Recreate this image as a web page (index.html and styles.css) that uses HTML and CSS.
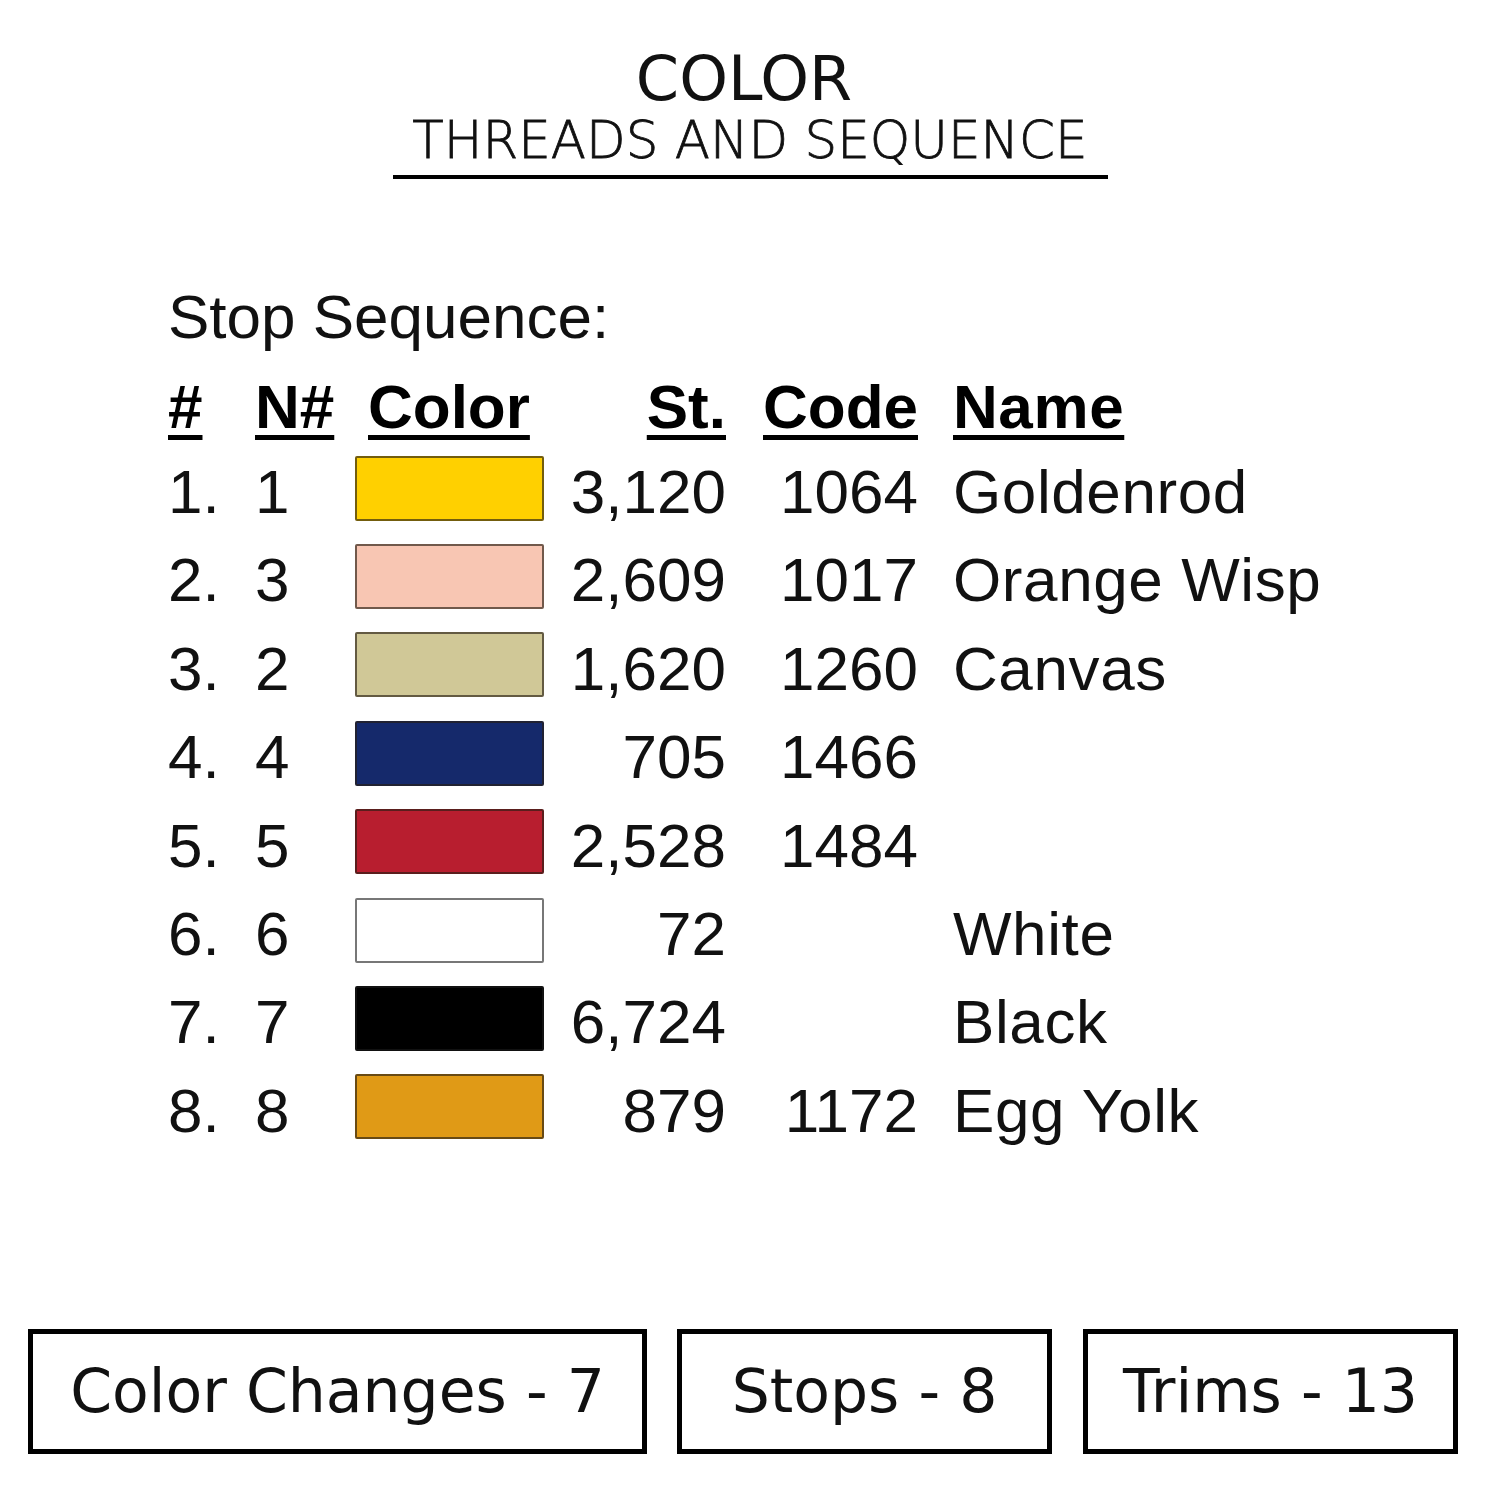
FILE: index.html
```html
<!DOCTYPE html>
<html>
<head>
<meta charset="utf-8">
<link rel="stylesheet" href="styles.css">
</head>
<body>
<div class="page">
  <header class="head">
    <div class="head-inner">
      <div class="title">COLOR</div>
      <div class="subtitle">THREADS AND SEQUENCE</div>
    </div>
  </header>

  <section class="seq">
    <div class="seq-title">Stop Sequence:</div>
    <div class="grid">
      <div class="h"><span class="u">#</span></div>
      <div class="h"><span class="u">N#</span></div>
      <div class="h h-color"><span class="u">Color</span></div>
      <div class="h r"><span class="u">St.</span></div>
      <div class="h r"><span class="u">Code</span></div>
      <div class="h name"><span class="u">Name</span></div>

      <div class="c">1.</div><div class="c">1</div><div class="sw"><span class="swatch gold"></span></div><div class="c r">3,120</div><div class="c r">1064</div><div class="c name">Goldenrod</div>
      <div class="c">2.</div><div class="c">3</div><div class="sw"><span class="swatch pink"></span></div><div class="c r">2,609</div><div class="c r">1017</div><div class="c name">Orange Wisp</div>
      <div class="c">3.</div><div class="c">2</div><div class="sw"><span class="swatch canvas"></span></div><div class="c r">1,620</div><div class="c r">1260</div><div class="c name">Canvas</div>
      <div class="c">4.</div><div class="c">4</div><div class="sw"><span class="swatch navy"></span></div><div class="c r">705</div><div class="c r">1466</div><div class="c name"></div>
      <div class="c">5.</div><div class="c">5</div><div class="sw"><span class="swatch red"></span></div><div class="c r">2,528</div><div class="c r">1484</div><div class="c name"></div>
      <div class="c">6.</div><div class="c">6</div><div class="sw"><span class="swatch white"></span></div><div class="c r">72</div><div class="c r"></div><div class="c name">White</div>
      <div class="c">7.</div><div class="c">7</div><div class="sw"><span class="swatch black"></span></div><div class="c r">6,724</div><div class="c r"></div><div class="c name">Black</div>
      <div class="c">8.</div><div class="c">8</div><div class="sw"><span class="swatch yolk"></span></div><div class="c r">879</div><div class="c r">1172</div><div class="c name">Egg Yolk</div>
    </div>
  </section>

  <footer class="stats">
    <div class="stat wide">Color Changes - 7</div>
    <div class="stat">Stops - 8</div>
    <div class="stat">Trims - 13</div>
  </footer>
</div>
</body>
</html>
```

FILE: styles.css
```css
* { box-sizing: border-box; }
html, body { margin: 0; padding: 0; background: #fff; }
body { width: 1500px; height: 1500px; overflow: hidden; color: #000; }

.page { width: 1500px; }

.head { display: flex; justify-content: center; padding-top: 48px; }
.head-inner {
  width: 715px;
  border-bottom: 4px solid #000;
  padding-bottom: 9px;
  text-align: center;
  font-family: "DejaVu Sans", sans-serif;
  color: #111;
}
.title { font-size: 62px; line-height: 61px; margin-right: 12px; }
.subtitle {
  font-size: 51.5px;
  line-height: 52px;
  margin-top: 5px;
  font-weight: 300;
  -webkit-text-stroke: 0.8px #111;
}

.seq {
  font-family: "Liberation Sans", Arial, sans-serif;
  font-size: 62px;
  padding-left: 168px;
  margin-top: 103px;
}
.seq-title { line-height: 70px; color: #111; }

.grid {
  margin-top: 14px;
  display: grid;
  grid-template-columns: 87px 100px 189px 182px 192px auto;
  grid-template-rows: 82px;
  grid-auto-rows: 88.4px;
  line-height: 88.4px;
  white-space: nowrap;
}
.h { font-weight: bold; line-height: 82px; }
.h-color { padding-left: 13px; }
.u {
  text-decoration: underline;
  text-decoration-thickness: 5px;
  text-underline-offset: 7px;
}
.r { text-align: right; }
.name { padding-left: 35px; letter-spacing: 0.6px; }
.c { color: #111; }
.sw { padding-top: 7.6px; }
.swatch {
  display: block;
  width: 189px;
  height: 65px;
  border: 2px solid rgba(40, 30, 20, 0.65);
  border-radius: 2px;
}
.gold { background: #ffd000; }
.pink { background: #f8c6b3; }
.canvas { background: #d0c897; }
.navy { background: #15296b; }
.red { background: #b81e2f; }
.white { background: #fff; border-color: #777; }
.black { background: #000; border-color: #111; }
.yolk { background: #e09a16; }

.stats {
  display: flex;
  padding-left: 28px;
  margin-top: 174px;
}
.stat {
  width: 375px;
  height: 125px;
  border: 5px solid #000;
  display: flex;
  align-items: center;
  justify-content: center;
  font-family: "DejaVu Sans", sans-serif;
  font-size: 60px;
  color: #111;
  margin-left: 31px;
  padding-bottom: 2px;
}
.stat.wide { width: 619px; margin-left: 0; }
.stat:nth-child(2) { margin-left: 30px; }
```
